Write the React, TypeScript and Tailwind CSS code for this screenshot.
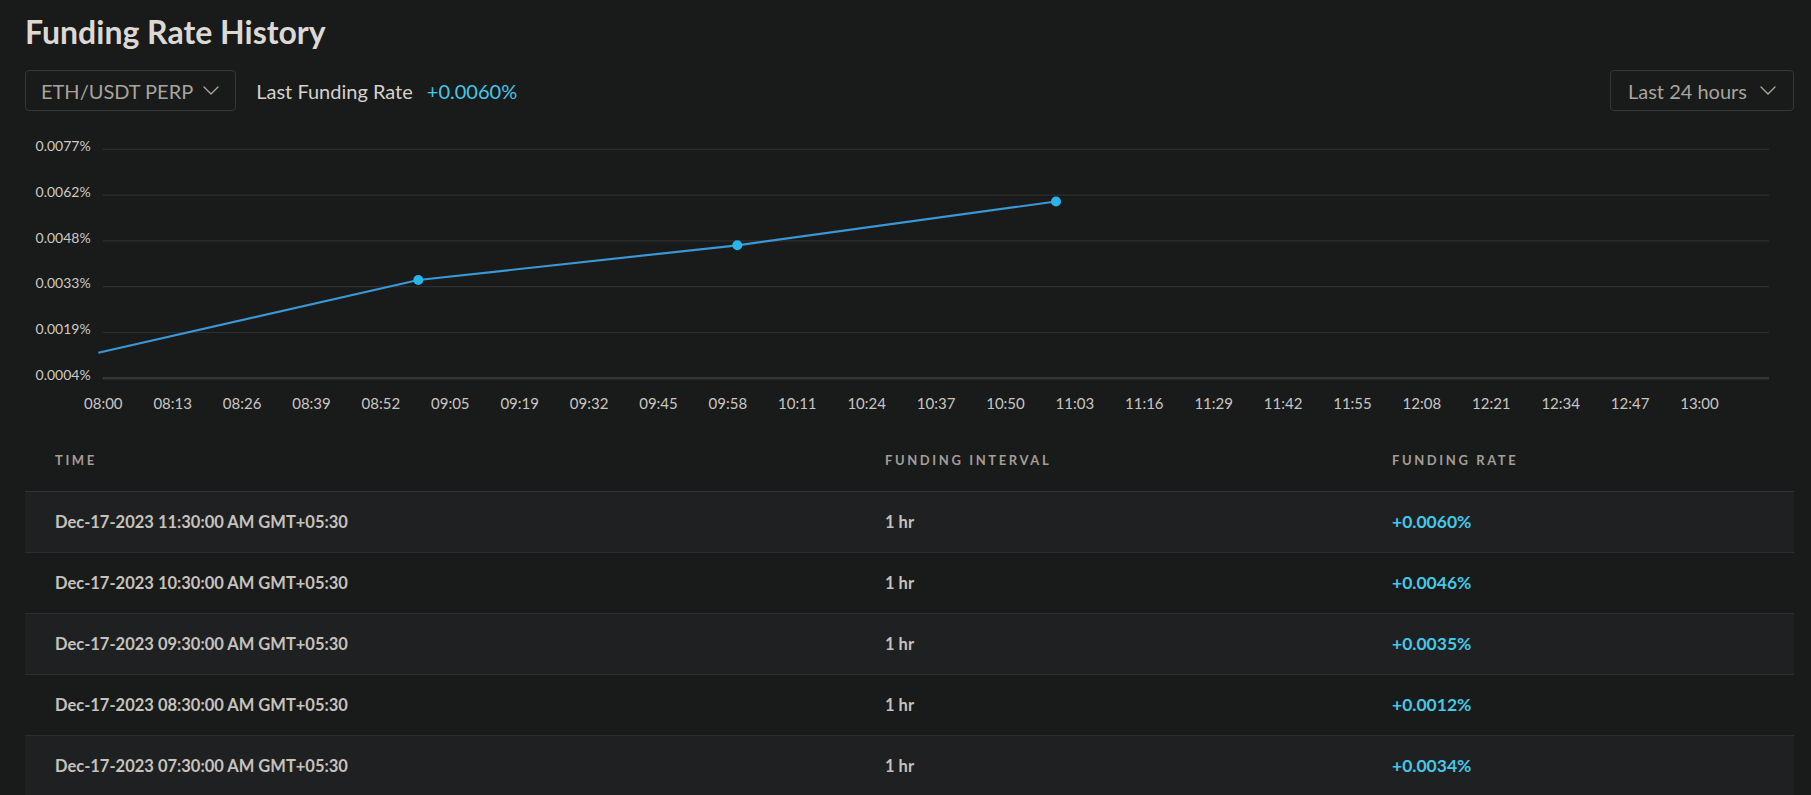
const yTicks = ["0.0077%", "0.0062%", "0.0048%", "0.0033%", "0.0019%", "0.0004%"];

const xTicks = [
  "08:00", "08:13", "08:26", "08:39", "08:52", "09:05", "09:19", "09:32",
  "09:45", "09:58", "10:11", "10:24", "10:37", "10:50", "11:03", "11:16",
  "11:29", "11:42", "11:55", "12:08", "12:21", "12:34", "12:47", "13:00",
];

// chart points, in svg px
const points = [
  { x: 393.3, y: 169 },
  { x: 712.3, y: 134.3 },
  { x: 1031, y: 90.5 },
];

const rows = [
  { time: "Dec-17-2023 11:30:00 AM GMT+05:30", rate: "+0.0060%" },
  { time: "Dec-17-2023 10:30:00 AM GMT+05:30", rate: "+0.0046%" },
  { time: "Dec-17-2023 09:30:00 AM GMT+05:30", rate: "+0.0035%" },
  { time: "Dec-17-2023 08:30:00 AM GMT+05:30", rate: "+0.0012%" },
  { time: "Dec-17-2023 07:30:00 AM GMT+05:30", rate: "+0.0034%" },
];

const Chevron = () => (
  <svg width="16" height="9" viewBox="0 0 16 9" fill="none">
    <path d="M1 1l7 7 7-7" stroke="currentColor" strokeWidth="1.4" strokeLinecap="round" strokeLinejoin="round" />
  </svg>
);

const Dropdown = ({ label, wide }: { label: string; wide?: boolean }) => (
  <button
    className={`flex h-[41px] items-center rounded-[4px] border border-[#353637] text-[20px] text-[#a9a49e] ${
      wide ? "gap-[13px] pl-[17px] pr-[17px]" : "gap-[10px] pl-[15px] pr-[16px]"
    }`}
  >
    <span>{label}</span>
    <Chevron />
  </button>
);

const RateChart = () => {
  const gridTop = 38.3;
  const step = 45.8;
  const line = `M73.3 241.7 ${points.map((p) => `L${p.x} ${p.y}`).join(" ")}`;

  return (
    <svg width="1769" height="319" viewBox="0 0 1769 319" className="block" fontFamily="Lato, sans-serif">
      {yTicks.map((t, i) => {
        const y = gridTop + i * step;
        const last = i === yTicks.length - 1;
        return (
          <g key={t}>
            <line x1="77.7" x2="1744" y1={y} y2={y} stroke={last ? "#353637" : "#2e2f30"} strokeWidth={last ? 2.6 : 1.2} />
            <text x="65.7" y={y + 1.6} textAnchor="end" fontSize="14" fill="#cdcac6">
              {t}
            </text>
          </g>
        );
      })}
      {xTicks.map((t, i) => (
        <text key={t} x={78.3 + i * 69.4} y="298.3" textAnchor="middle" fontSize="15" fill="#c9c6c2">
          {t}
        </text>
      ))}
      <path d={line} fill="none" stroke="#3a98d6" strokeWidth="2.2" strokeLinejoin="round" />
      {points.map((p) => (
        <circle key={p.x} cx={p.x} cy={p.y} r="5" fill="#2bb4e8" />
      ))}
    </svg>
  );
};

export default function App() {
  return (
    <div className="h-[795px] w-full overflow-hidden bg-[#191a1a] pl-[25px] pr-[17px] pt-4 font-['Lato',sans-serif]">
      <h1 className="text-[32px] font-bold leading-[32px] text-[#dcd9d5]">Funding Rate History</h1>

      {/* controls */}
      <div className="mt-[22px] flex items-center justify-between">
        <div className="flex items-center">
          <Dropdown label="ETH/USDT PERP" />
          <span className="ml-[20px] text-[20px] text-[#d5d2ce]">Last Funding Rate</span>
          <span className="ml-[14px] text-[20px] text-[#43c8e6]">+0.0060%</span>
        </div>
        <Dropdown label="Last 24 hours" wide />
      </div>

      <RateChart />

      {/* table */}
      <div>
        <div className="grid h-[62px] grid-cols-[830px_507px_1fr] items-center border-b border-[#333435] pl-[30px] text-[13px] font-bold tracking-[0.2em] text-[#a39e98]">
          <span>TIME</span>
          <span>FUNDING INTERVAL</span>
          <span>FUNDING RATE</span>
        </div>
        {rows.map((r, i) => (
          <div
            key={r.time}
            className={`grid h-[61px] grid-cols-[830px_507px_1fr] items-center border-b border-[#2c2d2e] pl-[30px] font-bold ${
              i % 2 === 0 ? "bg-[#1f2022]" : "bg-[#191a1a]"
            }`}
          >
            <span className="text-[16.5px] text-[#c6c2bd]">{r.time}</span>
            <span className="text-[16.5px] text-[#c6c2bd]">1 hr</span>
            <span className="text-[17.5px] text-[#43c8e6]">{r.rate}</span>
          </div>
        ))}
      </div>
    </div>
  );
}
